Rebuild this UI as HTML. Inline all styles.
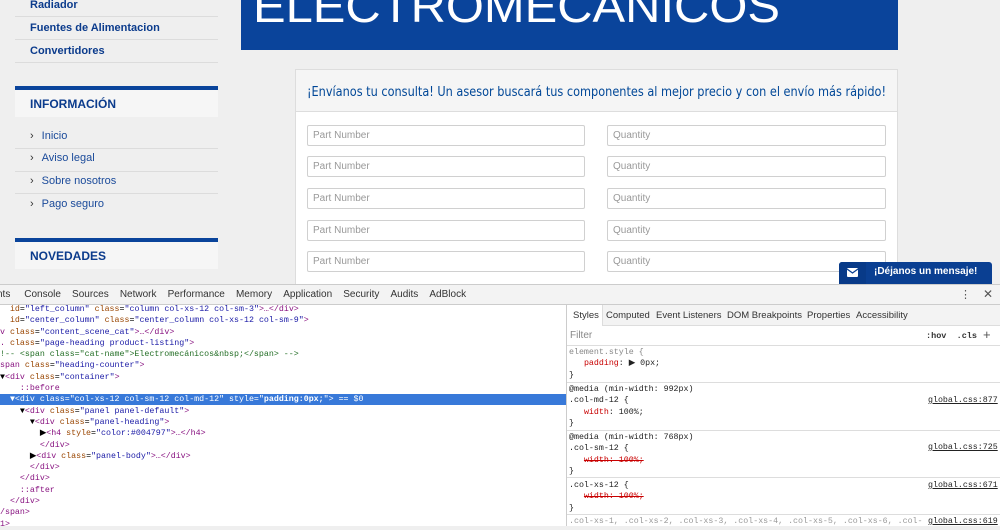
<!DOCTYPE html>
<html><head><meta charset="utf-8"><style>
*{margin:0;padding:0;box-sizing:border-box}
body{width:1000px;height:526px;overflow:hidden;background:#efefef;font-family:"Liberation Sans",sans-serif;position:relative}
.abs{position:absolute}
.lnk{position:absolute;left:30px;font-size:11px;font-weight:bold;color:#0b3b8c}
.hr{position:absolute;left:15px;width:203px;height:1px;background:#dcdcdc}
.box{position:absolute;left:15px;width:203px;background:#f6f6f6;border-top:4px solid #0a449b}
.box span{position:absolute;left:15px;font-size:12px;font-weight:bold;color:#0b3b8c}
.it{position:absolute;left:30px;font-size:11px;color:#1a4a9a}
.it b{font-weight:normal;margin-right:8px;color:#333}
.inp{position:absolute;height:21px;background:#fff;border:1px solid #d0d0d0;border-radius:2px;font-size:10px;color:#999;padding:4px 5px}
.dt{position:absolute;font-family:"Liberation Mono",monospace;font-size:8.3px;white-space:pre;line-height:11.3px}
.tag{color:#881280}.at{color:#994500}.av{color:#1a1aa6}
.st{position:absolute;top:310px;font-size:9.5px;color:#333}
</style></head><body>
<div class="lnk" style="top:-1px">Radiador</div>
<div class="hr" style="top:16px"></div>
<div class="lnk" style="top:22px">Fuentes de Alimentacion</div>
<div class="hr" style="top:39px"></div>
<div class="lnk" style="top:45px">Convertidores</div>
<div class="hr" style="top:62px"></div>
<div class="box" style="top:86px;height:31px"><span style="top:7px">INFORMACIÓN</span></div>
<div class="it" style="top:130px"><b>›</b>Inicio</div>
<div class="hr" style="top:148px"></div>
<div class="it" style="top:152px"><b>›</b>Aviso legal</div>
<div class="hr" style="top:171px"></div>
<div class="it" style="top:175px"><b>›</b>Sobre nosotros</div>
<div class="hr" style="top:193px"></div>
<div class="it" style="top:198px"><b>›</b>Pago seguro</div>
<div class="box" style="top:238px;height:31px"><span style="top:7px">NOVEDADES</span></div>

<div class="abs" style="left:241px;top:0;width:657px;height:50px;background:#0a449b"></div>
<svg class="abs" style="left:0;top:0" width="1000" height="50"><text x="253" y="22" fill="#fff" font-family="Liberation Sans" font-size="46" textLength="527" lengthAdjust="spacingAndGlyphs">ELECTROMECÁNICOS</text></svg>

<div class="abs" style="left:295px;top:69px;width:603px;height:216px;background:#fff;border:1px solid #ddd"></div>
<div class="abs" style="left:296px;top:70px;width:601px;height:42px;background:#f5f5f5;border-bottom:1px solid #ddd"></div>
<svg class="abs" style="left:0;top:70px" width="1000" height="40"><text x="307" y="26" fill="#004797" font-family="DejaVu Sans" font-size="13" textLength="579" lengthAdjust="spacingAndGlyphs">¡Envíanos tu consulta! Un asesor buscará tus componentes al mejor precio y con el envío más rápido!</text></svg>
<div class="inp" style="left:307px;top:125px;width:278px">Part Number</div>
<div class="inp" style="left:307px;top:156px;width:278px">Part Number</div>
<div class="inp" style="left:307px;top:188px;width:278px">Part Number</div>
<div class="inp" style="left:307px;top:220px;width:278px">Part Number</div>
<div class="inp" style="left:307px;top:251px;width:278px">Part Number</div>
<div class="inp" style="left:607px;top:125px;width:279px">Quantity</div>
<div class="inp" style="left:607px;top:156px;width:279px">Quantity</div>
<div class="inp" style="left:607px;top:188px;width:279px">Quantity</div>
<div class="inp" style="left:607px;top:220px;width:279px">Quantity</div>
<div class="inp" style="left:607px;top:251px;width:279px">Quantity</div>

<div class="abs" style="left:839px;top:262px;width:153px;height:23px;background:#0a3f92;border-radius:3px 3px 0 0"></div>
<div class="abs" style="left:839px;top:262px;width:27px;height:23px;background:#083a88;border-radius:3px 0 0 0"></div>
<svg class="abs" style="left:847px;top:268px" width="11" height="9"><rect x="0" y="0" width="11" height="9" rx="1" fill="#fff"/><path d="M0 1 L5.5 5 L11 1" stroke="#0a3f92" stroke-width="1.3" fill="none"/></svg>
<div class="abs" style="left:874px;top:266px;font-size:10px;font-weight:bold;color:#fff">¡Déjanos un mensaje!</div>

<div class="abs" style="left:0;top:284px;width:1000px;height:242px;background:#fff;border-top:1px solid #ccc"></div>
<div class="abs" style="left:0;top:285px;width:1000px;height:20px;background:#f3f3f3;border-bottom:1px solid #ccc"></div>
<div class="abs" style="left:-3px;top:289px;font-size:10px;color:#333;word-spacing:0">nts&nbsp;&nbsp;&nbsp;&nbsp;&nbsp;Console&nbsp;&nbsp;&nbsp;&nbsp;Sources&nbsp;&nbsp;&nbsp;&nbsp;Network&nbsp;&nbsp;&nbsp;&nbsp;Performance&nbsp;&nbsp;&nbsp;&nbsp;Memory&nbsp;&nbsp;&nbsp;&nbsp;Application&nbsp;&nbsp;&nbsp;&nbsp;Security&nbsp;&nbsp;&nbsp;&nbsp;Audits&nbsp;&nbsp;&nbsp;&nbsp;AdBlock</div>
<div class="abs" style="left:960px;top:288px;font-size:11px;color:#555">⋮</div>
<div class="abs" style="left:983px;top:287px;font-size:12px;color:#555">✕</div>
<div class="abs" style="left:566px;top:305px;width:1px;height:221px;background:#ccc"></div>
<div class="abs" style="left:0;top:394px;width:566px;height:11px;background:#3879d9"></div>
<div class="dt" style="left:0;top:304px"><span class="at">  id</span>=<span class="av">"left_column"</span> <span class="at">class</span>=<span class="av">"column col-xs-12 col-sm-3"</span><span class="tag">&gt;…&lt;/div&gt;</span>
<span class="at">  id</span>=<span class="av">"center_column"</span> <span class="at">class</span>=<span class="av">"center_column col-xs-12 col-sm-9"</span><span class="tag">&gt;</span>
<span class="tag">v</span> <span class="at">class</span>=<span class="av">"content_scene_cat"</span><span class="tag">&gt;…&lt;/div&gt;</span>
<span class="tag">.</span> <span class="at">class</span>=<span class="av">"page-heading product-listing"</span><span class="tag">&gt;</span>
<span style="color:#236e25">!-- &lt;span class="cat-name"&gt;Electromecánicos&amp;nbsp;&lt;/span&gt; --&gt;</span>
<span class="tag">span</span> <span class="at">class</span>=<span class="av">"heading-counter"</span><span class="tag">&gt;</span>
▼<span class="tag">&lt;div</span> <span class="at">class</span>=<span class="av">"container"</span><span class="tag">&gt;</span>
    <span class="tag">::before</span>
<span style="color:#fff">  ▼&lt;div class="col-xs-12 col-sm-12 col-md-12" style="<b>padding:0px;</b>"&gt; == $0</span>
    ▼<span class="tag">&lt;div</span> <span class="at">class</span>=<span class="av">"panel panel-default"</span><span class="tag">&gt;</span>
      ▼<span class="tag">&lt;div</span> <span class="at">class</span>=<span class="av">"panel-heading"</span><span class="tag">&gt;</span>
        ▶<span class="tag">&lt;h4</span> <span class="at">style</span>=<span class="av">"color:#004797"</span><span class="tag">&gt;…&lt;/h4&gt;</span>
        <span class="tag">&lt;/div&gt;</span>
      ▶<span class="tag">&lt;div</span> <span class="at">class</span>=<span class="av">"panel-body"</span><span class="tag">&gt;…&lt;/div&gt;</span>
      <span class="tag">&lt;/div&gt;</span>
    <span class="tag">&lt;/div&gt;</span>
    <span class="tag">::after</span>
  <span class="tag">&lt;/div&gt;</span>
<span class="tag">/span&gt;</span>
<span class="tag">1&gt;</span></div>

<div class="abs" style="left:567px;top:305px;width:433px;height:21px;border-bottom:1px solid #ddd;background:#f3f3f3"></div>
<div class="abs" style="left:567px;top:305px;width:36px;height:21px;background:#fff;border-right:1px solid #ddd"></div>
<div class="st" style="left:573px">Styles</div>
<div class="st" style="left:606px">Computed</div>
<div class="st" style="left:656px">Event Listeners</div>
<div class="st" style="left:727px">DOM Breakpoints</div>
<div class="st" style="left:807px">Properties</div>
<div class="st" style="left:856px">Accessibility</div>
<div class="abs" style="left:567px;top:326px;width:433px;height:20px;border-bottom:1px solid #ddd"></div>
<div class="abs" style="left:570px;top:330px;font-size:10px;color:#888">Filter</div>
<div class="abs" style="left:926px;top:331px;font-size:8.5px;color:#333;font-family:'Liberation Mono',monospace;font-weight:bold">:hov&nbsp;&nbsp;.cls</div>
<div class="abs" style="left:983px;top:327px;font-size:13px;color:#555">+</div>
<div class="dt" style="left:569px;top:347px;color:#222"><span style="color:#888">element.style {</span>
   <span style="color:#c80000">padding</span>: ▶ 0px;
}</div>
<div class="abs" style="left:567px;top:382px;width:433px;height:1px;background:#ddd"></div>
<div class="dt" style="left:569px;top:384px;color:#222">@media (min-width: 992px)
.col-md-12 {
   <span style="color:#c80000">width</span>: 100%;
}</div>
<div class="abs" style="left:567px;top:430px;width:433px;height:1px;background:#ddd"></div>
<div class="dt" style="left:569px;top:432px;color:#222">@media (min-width: 768px)
.col-sm-12 {
   <s style="color:#c80000">width: 100%;</s>
}</div>
<div class="abs" style="left:567px;top:477px;width:433px;height:1px;background:#ddd"></div>
<div class="dt" style="left:569px;top:480px;color:#222">.col-xs-12 {
   <s style="color:#c80000">width: 100%;</s>
}</div>
<div class="abs" style="left:567px;top:514px;width:433px;height:1px;background:#ddd"></div>
<div class="dt" style="left:569px;top:516px;color:#999">.col-xs-1, .col-xs-2, .col-xs-3, .col-xs-4, .col-xs-5, .col-xs-6, .col-</div>
<div class="dt" style="left:928px;top:395px;color:#222;text-decoration:underline">global.css:877</div>
<div class="dt" style="left:928px;top:442px;color:#222;text-decoration:underline">global.css:725</div>
<div class="dt" style="left:928px;top:480px;color:#222;text-decoration:underline">global.css:671</div>
<div class="abs" style="left:926px;top:515px;width:74px;height:11px;background:#fff"></div>
<div class="dt" style="left:928px;top:516px;color:#222;text-decoration:underline">global.css:619</div>
</body></html>
